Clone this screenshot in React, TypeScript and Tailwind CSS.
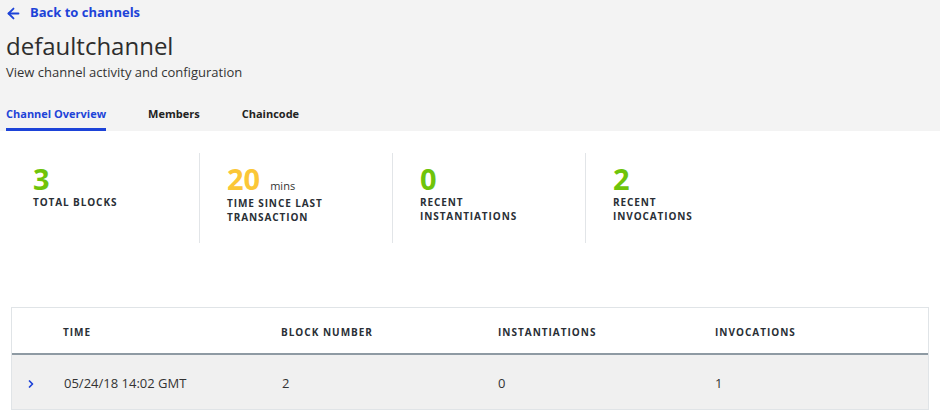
import { ArrowLeft, ChevronRight } from "lucide-react";

const stats = [
  { value: "3", unit: "", label: ["TOTAL BLOCKS"], color: "text-[#6fc40a]" },
  { value: "20", unit: "mins", label: ["TIME SINCE LAST", "TRANSACTION"], color: "text-[#fbc737]" },
  { value: "0", unit: "", label: ["RECENT", "INSTANTIATIONS"], color: "text-[#6fc40a]" },
  { value: "2", unit: "", label: ["RECENT", "INVOCATIONS"], color: "text-[#6fc40a]" },
];

const rows = [{ time: "05/24/18 14:02 GMT", block: "2", inst: "0", inv: "1" }];

export default function App() {
  return (
    <div className="w-[940px] h-[414px] overflow-hidden bg-white font-['Open_Sans',sans-serif] text-[#262626]">
      {/* header */}
      <div className="bg-[#f3f3f3] px-[6px] pt-[4px]">
        <a className="flex items-center gap-[8px] text-[#1d43d8] text-[13px] font-bold h-[18px]">
          <ArrowLeft size={17} strokeWidth={2.6} className="-ml-[1px]" />
          Back to channels
        </a>
        <h1 className="mt-[10px] text-[24px] leading-[28px] text-[#2d2d2d]">defaultchannel</h1>
        <p className="mt-[3px] text-[13px] leading-[18px] text-[#333]">View channel activity and configuration</p>
        <nav className="mt-[24px] flex text-[11px] leading-[17px] font-bold">
          <div className="border-b-[3px] border-[#1d43d8] pb-[6px] text-[#1d43d8]">Channel Overview</div>
          <div className="ml-[42px] pb-[6px] text-[#222]">Members</div>
          <div className="ml-[42px] pb-[6px] text-[#222]">Chaincode</div>
        </nav>
      </div>

      {/* stats */}
      <div className="flex pl-[6px] pt-[22px]">
        {stats.map((s, i) => (
          <div
            key={i}
            className={`w-[193px] h-[90px] pl-[27px] pt-[11px] ${i > 0 ? "border-l border-[#e2e5e8]" : ""}`}
          >
            <div className="flex items-baseline gap-[10px]">
              <span className={`text-[29px] leading-[30px] font-bold ${s.color}`}>{s.value}</span>
              {s.unit && <span className="text-[11px] text-[#333]">{s.unit}</span>}
            </div>
            <div className="mt-[1px] text-[10px] leading-[14px] font-bold tracking-[0.09em] text-[#2a2f36]">
              {s.label.map((l) => (
                <div key={l}>{l}</div>
              ))}
            </div>
          </div>
        ))}
      </div>

      {/* table */}
      <div className="mx-[11px] mt-[64px] border border-[#e0e4e7] bg-white">
        <div className="grid grid-cols-[51px_218px_217px_217px_1fr] h-[47px] pt-[3px] items-center border-b-2 border-[#8e9aa3] text-[10px] font-bold tracking-[0.1em] text-[#2a2f36]">
          <div />
          <div>TIME</div>
          <div>BLOCK NUMBER</div>
          <div>INSTANTIATIONS</div>
          <div>INVOCATIONS</div>
        </div>
        {rows.map((r) => (
          <div
            key={r.time}
            className="grid grid-cols-[51px_218px_217px_217px_1fr] h-[54px] pt-[4px] items-center bg-[#f0f0f0] text-[13px] text-[#333]"
          >
            <div className="pl-[13px] text-[#1d43d8]">
              <ChevronRight size={12} strokeWidth={3.5} />
            </div>
            <div className="pl-[1px]">{r.time}</div>
            <div className="pl-[1px]">{r.block}</div>
            <div>{r.inst}</div>
            <div>{r.inv}</div>
          </div>
        ))}
      </div>
    </div>
  );
}
